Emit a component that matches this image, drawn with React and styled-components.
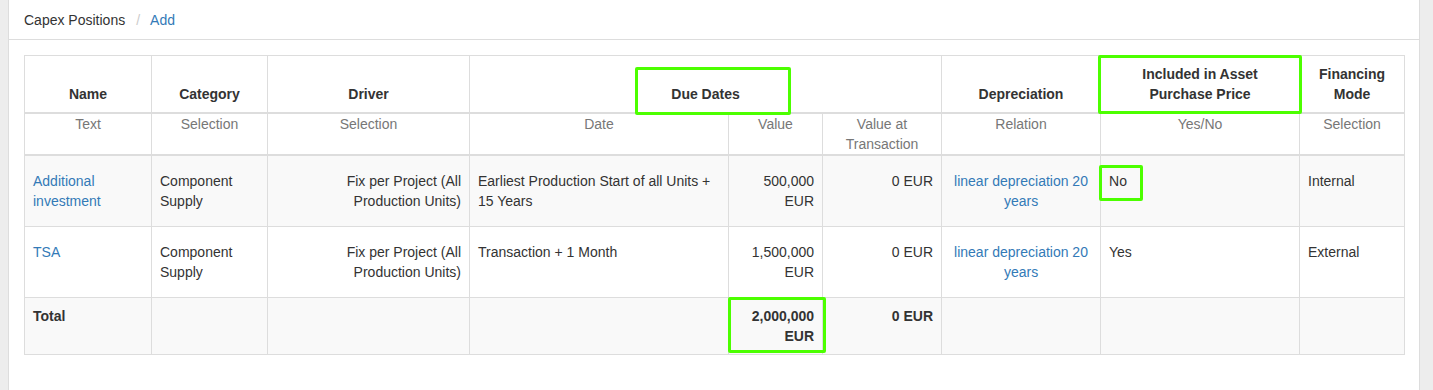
import React from 'react'
import styled, { createGlobalStyle } from 'styled-components'

const GlobalStyle = createGlobalStyle`
  html, body {
    margin: 0;
    padding: 0;
    background: #ededed;
    overflow: hidden;
  }
  body {
    font-family: "Helvetica Neue", Helvetica, "Liberation Sans", Arial, sans-serif;
    font-size: 14px;
    line-height: 20px;
    color: #333;
  }
`

const Page = styled.div`
  padding: 0 13px 0 8px;
`

const Panel = styled.section`
  background: #fff;
  border-left: 1px solid #ddd;
  border-right: 1px solid #ddd;
  min-height: 100vh;
`

const PanelHeading = styled.div`
  display: flex;
  align-items: center;
  height: 39px;
  padding: 0 15px;
  border-bottom: 1px solid #ddd;
`

const Crumb = styled.span`
  color: #333;
`

const Separator = styled.span`
  color: #ccc;
  margin: 0 10px 0 11px;
`

const CrumbLink = styled.a`
  color: #337ab7;
  text-decoration: none;
`

const PanelBody = styled.div`
  padding: 15px;
`

const Table = styled.table`
  width: 1380px;
  table-layout: fixed;
  border-collapse: collapse;
  border: 1px solid #ddd;
`

const HeadCell = styled.th`
  position: relative;
  padding: 8px;
  border: 1px solid #ddd;
  border-bottom: 2px solid #ddd;
  font-weight: bold;
  text-align: center;
  vertical-align: bottom;
`

const SubCell = styled.th`
  padding: 0 8px;
  border: 1px solid #ddd;
  border-bottom: 2px solid #ddd;
  font-weight: normal;
  color: #777;
  text-align: center;
  vertical-align: top;
  height: 40px;
`

const Row = styled.tr`
  background: ${p => (p.$striped ? '#f9f9f9' : '#fff')};
`

const Cell = styled.td`
  position: relative;
  padding: ${p => (p.$total ? '8px' : '15px 8px')};
  border: 1px solid #ddd;
  text-align: ${p => p.$align || 'left'};
  vertical-align: top;
  font-weight: ${p => (p.$total ? 'bold' : 'normal')};
`

const Link = styled.a`
  color: #337ab7;
  text-decoration: none;
`

// annotation boxes drawn over the table
const Highlight = styled.span`
  position: absolute;
  left: ${p => p.$left}px;
  top: ${p => p.$top}px;
  width: ${p => p.$w}px;
  height: ${p => p.$h}px;
  box-sizing: border-box;
  border: 3px solid #4cff00;
  border-radius: 2px;
  pointer-events: none;
`

const widths = [127, 116, 202, 259, 94, 119, 159, 199, 105]

const rows = [
  {
    name: 'Additional investment',
    value: '500,000 EUR',
    date: 'Earliest Production Start of all Units + 15 Years',
    included: 'No',
    mode: 'Internal',
  },
  {
    name: 'TSA',
    value: '1,500,000 EUR',
    date: 'Transaction + 1 Month',
    included: 'Yes',
    mode: 'External',
  },
]

export default function App() {
  return (
    <Page>
      <GlobalStyle />
      <Panel>
        <PanelHeading>
          <Crumb>Capex Positions</Crumb>
          <Separator>/</Separator>
          <CrumbLink href="#">Add</CrumbLink>
        </PanelHeading>
        <PanelBody>
          <Table>
            <colgroup>
              {widths.map((w, i) => (
                <col key={i} style={{ width: w }} />
              ))}
            </colgroup>
            <thead>
              <tr>
                <HeadCell>Name</HeadCell>
                <HeadCell>Category</HeadCell>
                <HeadCell>Driver</HeadCell>
                <HeadCell colSpan={3}>
                  Due Dates
                  <Highlight $left={165} $top={11} $w={156} $h={48} />
                </HeadCell>
                <HeadCell>Depreciation</HeadCell>
                <HeadCell>
                  Included in Asset
                  <br />
                  Purchase Price
                  <Highlight $left={-3} $top={-1} $w={204} $h={59} />
                </HeadCell>
                <HeadCell>Financing Mode</HeadCell>
              </tr>
              <tr>
                <SubCell>Text</SubCell>
                <SubCell>Selection</SubCell>
                <SubCell>Selection</SubCell>
                <SubCell>Date</SubCell>
                <SubCell>Value</SubCell>
                <SubCell>Value at Transaction</SubCell>
                <SubCell>Relation</SubCell>
                <SubCell>Yes/No</SubCell>
                <SubCell>Selection</SubCell>
              </tr>
            </thead>
            <tbody>
              {rows.map((r, i) => (
                <Row key={r.name} $striped={i % 2 === 0}>
                  <Cell>
                    <Link href="#">{r.name}</Link>
                  </Cell>
                  <Cell>Component Supply</Cell>
                  <Cell $align="right">Fix per Project (All Production Units)</Cell>
                  <Cell>{r.date}</Cell>
                  <Cell $align="right">{r.value}</Cell>
                  <Cell $align="right">0 EUR</Cell>
                  <Cell $align="center">
                    <Link href="#">linear depreciation 20 years</Link>
                  </Cell>
                  <Cell>
                    {r.included}
                    {r.included === 'No' && <Highlight $left={-2} $top={9} $w={44} $h={36} />}
                  </Cell>
                  <Cell>{r.mode}</Cell>
                </Row>
              ))}
              <Row $striped>
                <Cell $total>Total</Cell>
                <Cell $total />
                <Cell $total />
                <Cell $total />
                <Cell $total $align="right">
                  2,000,000 EUR
                  <Highlight $left={-1} $top={-1} $w={98} $h={56} />
                </Cell>
                <Cell $total $align="right">0 EUR</Cell>
                <Cell $total />
                <Cell $total />
                <Cell $total />
              </Row>
            </tbody>
          </Table>
        </PanelBody>
      </Panel>
    </Page>
  )
}
